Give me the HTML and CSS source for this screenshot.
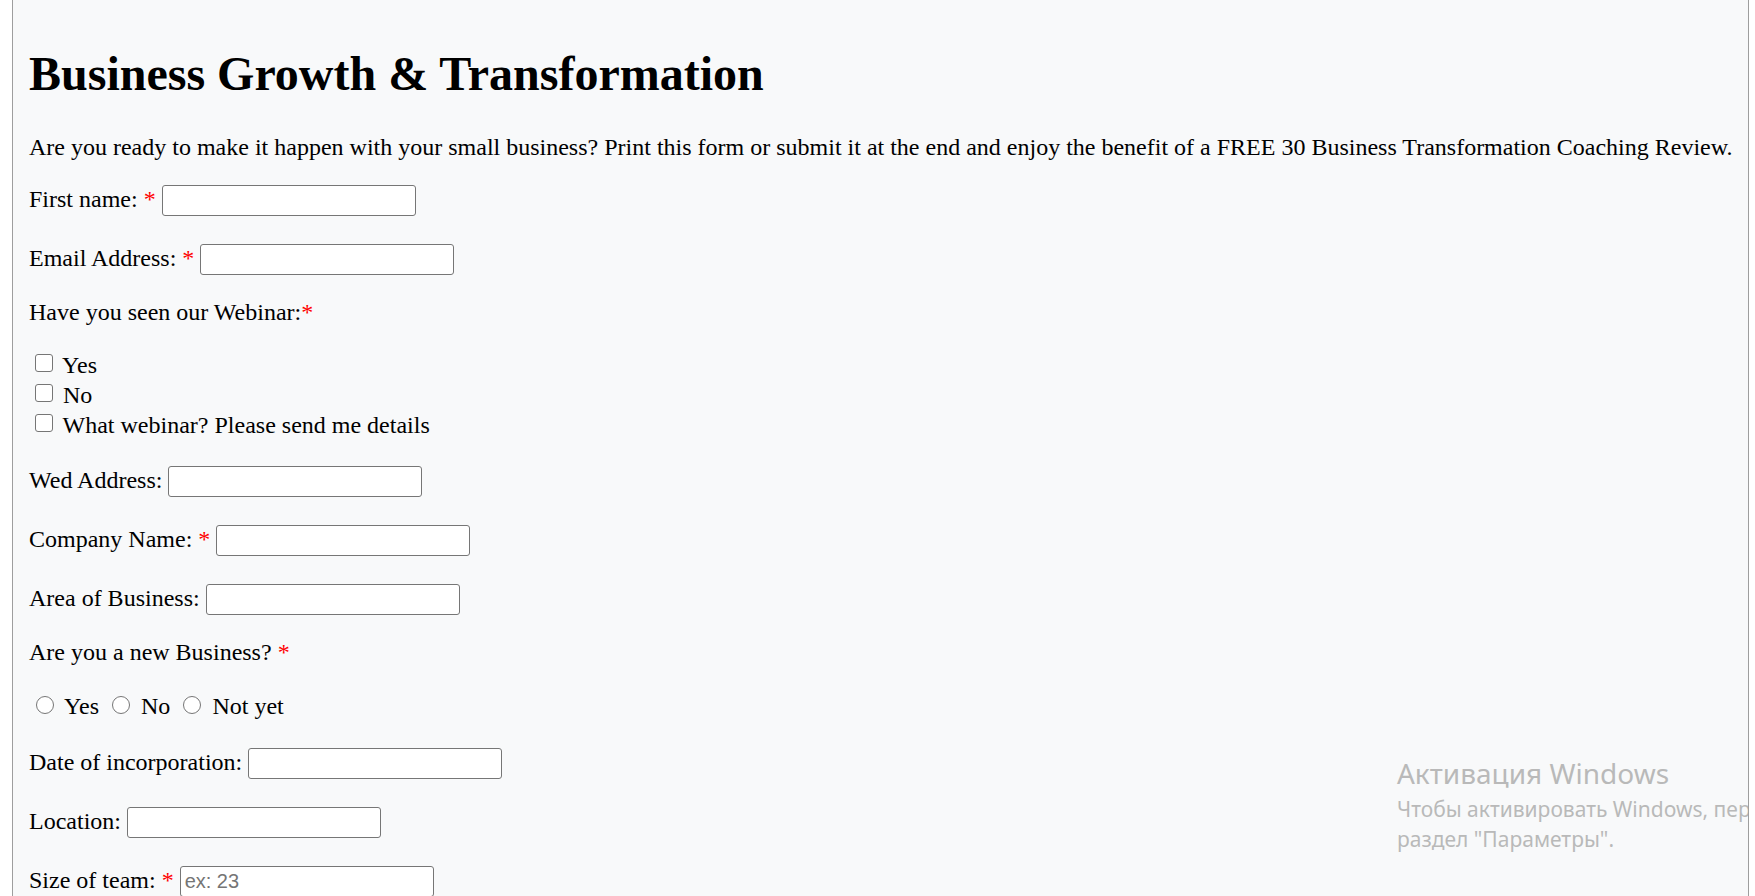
FILE: index.html
```html
<!DOCTYPE html>
<html lang="en">
<head>
<meta charset="utf-8">
<title>Business Growth &amp; Transformation</title>
<link rel="stylesheet" href="styles.css">
</head>
<body>
<main class="page">
  <h1 class="title">Business Growth &amp; Transformation</h1>
  <p class="intro">Are you ready to make it happen with your small business? Print this form or submit it at the end and enjoy the benefit of a FREE 30 Business Transformation Coaching Review.</p>
  <form class="form">
    <div class="field"><label for="fname">First name: <span class="req">*</span></label> <input id="fname" class="text-input" type="text"></div>
    <div class="field"><label for="email">Email Address: <span class="req">*</span></label> <input id="email" class="text-input" type="text"></div>
    <div class="question">Have you seen our Webinar:<span class="req">*</span></div>
    <div class="checks">
      <label class="check"><input class="box" type="checkbox"> Yes</label>
      <label class="check"><input class="box" type="checkbox"> No</label>
      <label class="check"><input class="box" type="checkbox"> What webinar? Please send me details</label>
    </div>
    <div class="field"><label for="web">Wed Address:</label> <input id="web" class="text-input" type="text"></div>
    <div class="field"><label for="company">Company Name: <span class="req">*</span></label> <input id="company" class="text-input" type="text"></div>
    <div class="field"><label for="area">Area of Business:</label> <input id="area" class="text-input" type="text"></div>
    <div class="question">Are you a new Business? <span class="req">*</span></div>
    <div class="radios"><label class="radio"><input class="round" type="radio" name="newbiz"> Yes</label> <label class="radio"><input class="round" type="radio" name="newbiz"> No</label> <label class="radio"><input class="round" type="radio" name="newbiz"> Not yet</label></div>
    <div class="field"><label for="date">Date of incorporation:</label> <input id="date" class="text-input" type="text"></div>
    <div class="field"><label for="loc">Location:</label> <input id="loc" class="text-input" type="text"></div>
    <div class="field"><label for="team">Size of team: <span class="req">*</span></label> <input id="team" class="text-input" type="text" placeholder="ex: 23"></div>
  </form>
  <div class="watermark">
    <div class="wm-title">Активация Windows</div>
    <div class="wm-line">Чтобы активировать Windows, перейдите в</div>
    <div class="wm-line">раздел "Параметры".</div>
  </div>
</main>
</body>
</html>
```
FILE: styles.css
```css
html, body {
  margin: 0;
  padding: 0;
  height: 100%;
  overflow: hidden;
  background: #ffffff;
}

body {
  font-family: "Liberation Serif", "Times New Roman", serif;
  color: #000000;
}

.page {
  position: relative;
  box-sizing: border-box;
  height: 100vh;
  margin: 0 6px 0 12px;
  padding: 45px 16px 0;
  background: #f8f9fa;
  border-left: 1px solid #9e9e9e;
  border-right: 1px solid #9e9e9e;
  overflow: hidden;
  font-size: 24px;
  line-height: 28px;
}

.title {
  margin: 0 0 31px;
  font-size: 48px;
  line-height: 57px;
  font-weight: bold;
}

.intro {
  margin: 0 0 24px;
  white-space: nowrap;
}

.form {
  display: flex;
  flex-direction: column;
}

.field {
  margin-top: 28px;
  line-height: 28px;
}

.field:first-child {
  margin-top: 0;
}

.checks + .field {
  margin-top: 26px;
}

.radios + .field {
  margin-top: 27px;
}

.req {
  color: #ff0000;
}

.text-input {
  box-sizing: border-box;
  width: 254px;
  height: 31px;
  margin: 0;
  padding: 1px 4px;
  border: 1px solid #767676;
  border-radius: 3px;
  background: #ffffff;
  font-family: "Liberation Sans", Arial, sans-serif;
  font-size: 20px;
  color: #000000;
  vertical-align: baseline;
}

.text-input::placeholder {
  color: #757575;
}

.question {
  margin-top: 24px;
  line-height: 28px;
}

.field + .question {
  margin-top: 23px;
}

.checks {
  margin-top: 24px;
}

.check {
  display: block;
  line-height: 30px;
}

.box {
  -webkit-appearance: none;
  appearance: none;
  box-sizing: border-box;
  display: inline-block;
  width: 18px;
  height: 18px;
  margin: 0 4px 1px 6px;
  border: 1px solid #767676;
  border-radius: 3px;
  background: #ffffff;
  vertical-align: baseline;
}

.radios {
  margin-top: 25px;
  line-height: 30px;
}

.round {
  -webkit-appearance: none;
  appearance: none;
  box-sizing: border-box;
  display: inline-block;
  width: 18px;
  height: 18px;
  margin: 0 5px 0 7px;
  border: 1px solid #767676;
  border-radius: 50%;
  background: #ffffff;
  vertical-align: baseline;
}

.watermark {
  position: absolute;
  left: 1384px;
  top: 752px;
  color: #b9b9b9;
  font-family: "Noto Sans", "Open Sans", sans-serif;
  white-space: nowrap;
}

.wm-title {
  font-size: 28px;
  line-height: 42px;
}

.wm-line {
  font-size: 21px;
  line-height: 30px;
}
```
